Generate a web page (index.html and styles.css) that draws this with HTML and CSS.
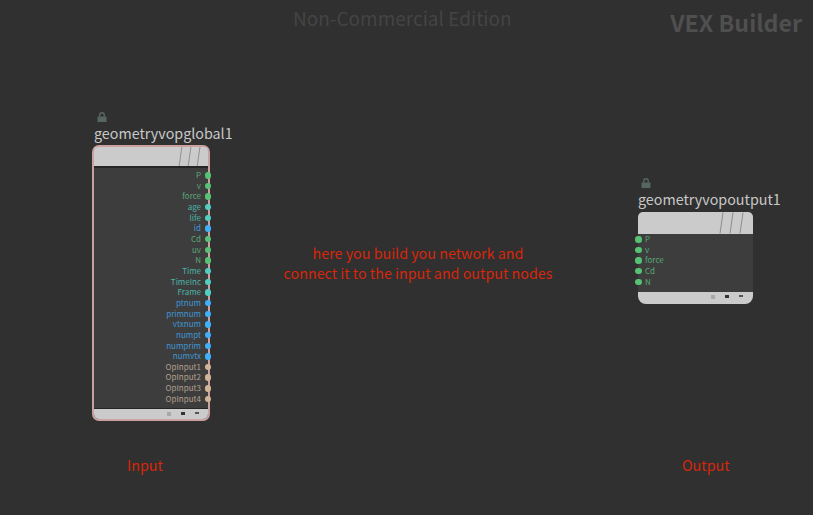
FILE: index.html
```
<!DOCTYPE html>
<html lang="en">
<head>
<meta charset="utf-8">
<title>VEX Builder</title>
<link rel="stylesheet" href="styles.css">
</head>
<body>
<main class="canvas">
  <div class="watermark">Non-Commercial Edition</div>
  <div class="context">VEX Builder</div>

  <section class="node node-in">
    <svg class="lock" viewBox="0 0 10 10"><path class="lock-body" d="M0.5 4.5h9v5.5h-9z"/><path class="lock-loop" d="M2.7 4.5V3a2.3 2.3 0 0 1 4.6 0v1.5"/></svg>
    <div class="name">geometryvopglobal1</div>
    <div class="box box-in">
      <div class="head head-in">
        <svg class="slashes" viewBox="0 0 26 21"><path d="M1 21L4 0M11 21L14 0M21 21L24 0"/></svg>
      </div>
      <div class="ports ports-out">
        <div class="port green">P</div>
        <div class="port green">v</div>
        <div class="port green">force</div>
        <div class="port teal">age</div>
        <div class="port teal">life</div>
        <div class="port blue">id</div>
        <div class="port green">Cd</div>
        <div class="port green">uv</div>
        <div class="port green">N</div>
        <div class="port teal">Time</div>
        <div class="port teal">TimeInc</div>
        <div class="port teal">Frame</div>
        <div class="port blue">ptnum</div>
        <div class="port blue">primnum</div>
        <div class="port blue">vtxnum</div>
        <div class="port blue">numpt</div>
        <div class="port blue">numprim</div>
        <div class="port blue">numvtx</div>
        <div class="port tan">OpInput1</div>
        <div class="port tan">OpInput2</div>
        <div class="port tan">OpInput3</div>
        <div class="port tan">OpInput4</div>
      </div>
      <div class="foot foot-in"><i class="mark mark-a"></i><i class="mark mark-b"></i><i class="mark mark-c"></i></div>
    </div>
  </section>

  <section class="node node-out">
    <svg class="lock" viewBox="0 0 10 10"><path class="lock-body" d="M0.5 4.5h9v5.5h-9z"/><path class="lock-loop" d="M2.7 4.5V3a2.3 2.3 0 0 1 4.6 0v1.5"/></svg>
    <div class="name">geometryvopoutput1</div>
    <div class="box box-out">
      <div class="head head-out">
        <svg class="slashes" viewBox="0 0 26 21"><path d="M1 21L4 0M11 21L14 0M21 21L24 0"/></svg>
      </div>
      <div class="ports ports-in">
        <div class="port green">P</div>
        <div class="port green">v</div>
        <div class="port green">force</div>
        <div class="port green">Cd</div>
        <div class="port green">N</div>
      </div>
      <div class="foot foot-out"><i class="mark mark-a"></i><i class="mark mark-b"></i><i class="mark mark-c"></i></div>
    </div>
  </section>

  <div class="note note-center">here you build you network and<br>connect it to the input and output nodes</div>
  <div class="note note-input">Input</div>
  <div class="note note-output">Output</div>
</main>
</body>
</html>
```
FILE: styles.css
```
html, body {
  margin: 0;
  padding: 0;
  background: #303030;
}
.canvas {
  position: relative;
  width: 813px;
  height: 515px;
  overflow: hidden;
  background: #303030;
  font-family: "Noto Sans CJK SC", "Noto Sans", sans-serif;
}
.watermark {
  position: absolute;
  left: 293px;
  top: 4px;
  font-size: 19px;
  line-height: 28px;
  color: #444444;
  white-space: nowrap;
}
.context {
  position: absolute;
  right: 11px;
  top: 5px;
  font-size: 23.2px;
  line-height: 34px;
  font-weight: 700;
  color: #4f4f4f;
  white-space: nowrap;
}
.node {
  position: absolute;
  display: flex;
  flex-direction: column;
  align-items: flex-start;
}
.node-in { left: 92px; top: 112px; width: 118px; }
.node-out { left: 638px; top: 178px; width: 115px; }
.lock {
  width: 10px;
  height: 10px;
  margin-left: 5px;
  display: block;
}
.node-out .lock { margin-left: 3px; }
.lock-body { fill: #566660; }
.lock-loop { fill: none; stroke: #566660; stroke-width: 1.4; }
.name {
  margin-left: 2px;
  height: 23px;
  line-height: 21px;
  font-size: 14.3px;
  color: #c8c8c8;
  white-space: nowrap;
}
.node-out .name { margin-left: 0; }
.box {
  position: relative;
  display: flex;
  flex-direction: column;
  box-sizing: border-box;
  width: 100%;
  background: #3d3d3d;
}
.box-in {
  height: 276px;
  border: 2px solid #c9a1a1;
  border-radius: 7px;
}
.box-out {
  height: 92px;
  margin-top: 1px;
  border-radius: 5px 5px 8px 8px;
}
.head {
  position: relative;
  background: #cbcbcb;
  flex: none;
}
.head-in {
  height: 19px;
  border-bottom: 2px solid #262626;
  border-radius: 4px 4px 0 0;
}
.head-out {
  height: 22px;
  border-radius: 5px 5px 0 0;
}
.slashes {
  position: absolute;
  top: 0;
  width: 26px;
  height: 100%;
}
.head-in .slashes { right: 5px; }
.head-out .slashes { right: 8px; }
.slashes path { stroke: #8c8c8c; stroke-width: 1; fill: none; }
.ports {
  flex: 1;
  display: flex;
  flex-direction: column;
  min-height: 0;
}
.ports-out { padding-top: 2px; }
.ports-in { padding-top: 0; }
.port {
  position: relative;
  height: 10.66px;
  line-height: 9px;
  font-size: 8px;
  white-space: nowrap;
}
.ports-out .port { text-align: right; padding-right: 7px; }
.ports-in .port { padding-left: 7px; }
.port::after {
  content: "";
  position: absolute;
  top: 2px;
  width: 6.5px;
  height: 6.5px;
  border-radius: 50%;
  background: currentColor;
}
.ports-out .port::after { right: -3px; }
.ports-in .port::after { left: -3px; }
.green { color: #5aa876; }
.green::after { color: #58c274; }
.teal { color: #4db3a8; }
.teal::after { color: #52cfc3; }
.blue { color: #3f97d6; }
.blue::after { color: #3fb0fb; }
.tan { color: #b3a08e; }
.tan::after { color: #d2b596; }
.foot {
  position: relative;
  flex: none;
  background: #cbcbcb;
}
.foot-in {
  height: 10px;
  border-top: 1px solid #262626;
  border-radius: 0 0 5px 5px;
}
.foot-out {
  height: 12px;
  border-radius: 0 0 8px 8px;
}
.mark {
  position: absolute;
  display: block;
}
.mark-a { width: 4px; height: 4px; top: 3px; background: #a8a8a8; }
.mark-b { width: 4px; height: 3px; top: 3px; background: #333333; }
.mark-c { width: 4px; height: 2px; top: 3px; background: #555555; }
.foot-in .mark-a { right: 37px; }
.foot-in .mark-b { right: 23px; }
.foot-in .mark-c { right: 9px; }
.foot-out .mark-a { right: 38px; }
.foot-out .mark-b { right: 24px; }
.foot-out .mark-c { right: 10px; }
.note {
  position: absolute;
  font-size: 14.3px;
  line-height: 20px;
  color: #d8260a;
  white-space: nowrap;
}
.note-center { left: 268px; width: 300px; top: 243px; text-align: center; }
.note-input { left: 127px; top: 455px; }
.note-output { left: 682px; top: 455px; }
```
